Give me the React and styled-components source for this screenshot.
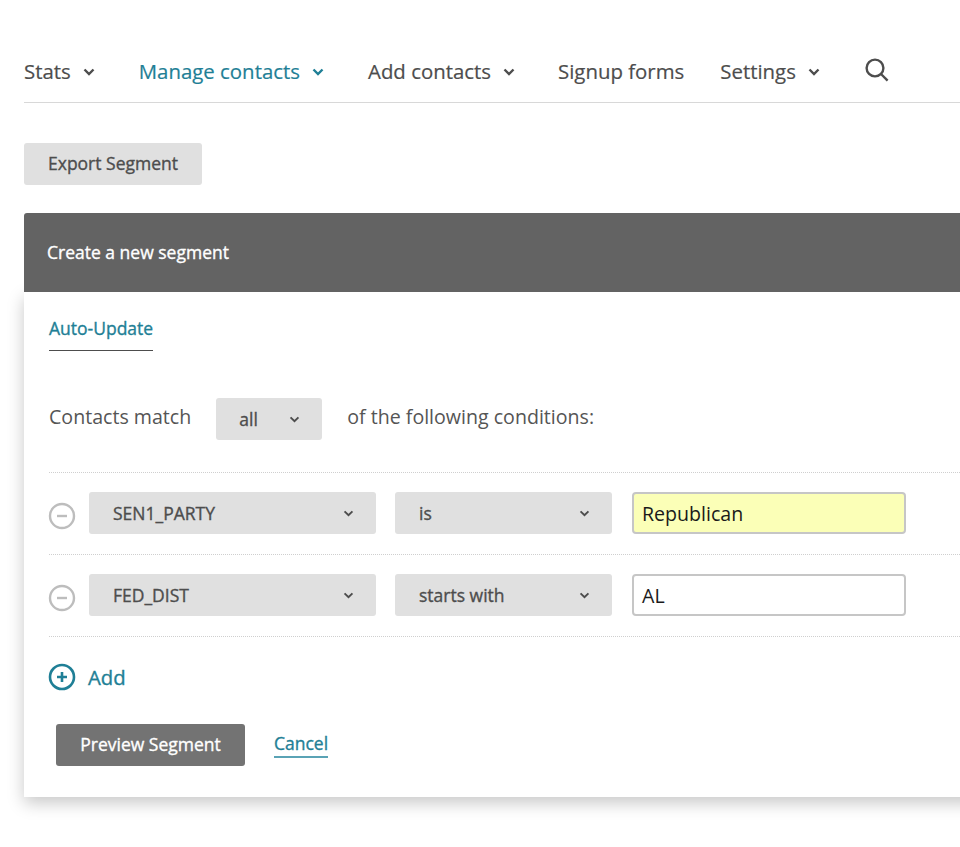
import React from 'react';
import styled, { createGlobalStyle, css } from 'styled-components';

const GlobalStyle = createGlobalStyle`
  html, body {
    margin: 0;
    padding: 0;
    background: #fff;
  }
  body {
    font-family: "Open Sans", "Liberation Sans", sans-serif;
    color: #4d4d4d;
  }
`;

const mediumText = css`
  font-size: 17.5px;
  font-weight: 400;
  -webkit-text-stroke: 0.35px currentColor;
`;

const Page = styled.div`
  width: 960px;
  height: 847px;
  padding: 0 0 0 24px;
  box-sizing: border-box;
  overflow: hidden;
`;

const Nav = styled.nav`
  height: 103px;
  box-sizing: border-box;
  padding-top: 53px;
  border-bottom: 1px solid #d8d8d8;
  display: flex;
  align-items: flex-start;
`;

const NavItem = styled.a`
  display: flex;
  align-items: center;
  height: 37px;
  font-size: 20.4px;
  line-height: 37px;
  -webkit-text-stroke: 0.2px currentColor;
  margin-right: ${(p) => p.$gap}px;
  color: ${(p) => (p.$active ? '#1f7f96' : '#4d4d4d')};
`;

const NavCaret = styled.svg`
  width: 12px;
  height: 8px;
  margin-left: 12px;
  fill: none;
  stroke: currentColor;
  stroke-width: 2.4;
`;

const SearchIcon = styled.svg`
  width: 24px;
  height: 24px;
  margin-top: 5px;
  fill: none;
  stroke: #4d4d4d;
  stroke-width: 2.4;
`;

const ExportButton = styled.button`
  display: block;
  margin-top: 40px;
  width: 178px;
  height: 42px;
  padding: 0 0 2px;
  border: 0;
  border-radius: 3px;
  background: #e0e0e0;
  color: #4d4d4d;
  font-family: "Open Sans", sans-serif;
  ${mediumText}
`;

const Panel = styled.section`
  margin-top: 28px;
  width: 960px;
`;

const PanelHeader = styled.header`
  position: relative;
  z-index: 1;
  height: 79px;
  box-sizing: border-box;
  padding-left: 23px;
  background: #636363;
  color: #fff;
  ${mediumText}
  line-height: 79px;
  border-radius: 3px 0 0 0;
`;

const PanelBody = styled.div`
  height: 505px;
  box-sizing: border-box;
  padding: 24px 0 0 25px;
  background: #fff;
  box-shadow: 0 6px 16px rgba(0, 0, 0, 0.22);
`;

const Tab = styled.div`
  display: inline-block;
  height: 35px;
  box-sizing: border-box;
  border-bottom: 1px solid #4d4d4d;
  color: #1f7f96;
  ${mediumText}
  line-height: 25px;
`;

const MatchLine = styled.div`
  margin-top: 47px;
  height: 42px;
  display: flex;
  align-items: center;
  font-size: 19.6px;
  color: #555;
`;

const MatchText = styled.span`
  margin-bottom: 6px;
`;

const Select = styled.div`
  display: flex;
  align-items: center;
  justify-content: space-between;
  width: ${(p) => p.$width}px;
  height: 42px;
  box-sizing: border-box;
  padding: 0 22px 0 ${(p) => p.$pad}px;
  margin: ${(p) => p.$margin || 0};
  border-radius: 3px;
  background: #e0e0e0;
  color: #4d4d4d;
  ${mediumText}
`;

const SelectCaret = styled.svg`
  width: 11px;
  height: 7px;
  fill: none;
  stroke: #4d4d4d;
  stroke-width: 2.2;
`;

const Conditions = styled.div`
  margin-top: 32px;
  border-top: 1px dotted #cfcfcf;
`;

const Row = styled.div`
  height: 82px;
  box-sizing: border-box;
  padding-top: 19px;
  border-bottom: 1px dotted #cfcfcf;
  display: flex;
  align-items: flex-start;
`;

const RemoveIcon = styled.svg`
  width: 28px;
  height: 28px;
  margin: 10px 13px 0 -1px;
  flex: none;
`;

const ValueBox = styled.div`
  width: 274px;
  height: 42px;
  box-sizing: border-box;
  margin-left: 20px;
  padding-left: 8px;
  border: 2px solid #c6c6c6;
  border-radius: 4px;
  background: ${(p) => (p.$hit ? '#fbffb7' : '#fff')};
  color: #1a1a1a;
  font-size: 19.6px;
  line-height: 39px;
`;

const AddRow = styled.div`
  margin-top: 26px;
  height: 28px;
  display: flex;
  align-items: center;
  color: #1f7f96;
  font-size: 20.3px;
  -webkit-text-stroke: 0.35px currentColor;
`;

const AddIcon = styled.svg`
  width: 28px;
  height: 28px;
  margin: 0 12px 0 -1px;
`;

const Actions = styled.div`
  margin-top: 33px;
  padding-left: 7px;
  display: flex;
  align-items: flex-start;
`;

const PreviewButton = styled.button`
  width: 189px;
  height: 42px;
  padding: 0 0 2px;
  border: 0;
  border-radius: 3px;
  background: #737373;
  color: #fff;
  font-family: "Open Sans", sans-serif;
  ${mediumText}
`;

const CancelLink = styled.a`
  margin: 8px 0 0 29px;
  height: 24px;
  border-bottom: 2px solid #5aa3b5;
  color: #1f7f96;
  ${mediumText}
  line-height: 23px;
`;

const Caret = ({ as: Icon = NavCaret }) => (
    <Icon viewBox="0 0 12 8">
        <path d="M1.5 1.5 6 6l4.5-4.5" />
    </Icon>
);

const navItems = [
    { label: 'Stats', caret: true, gap: 44 },
    { label: 'Manage contacts', caret: true, active: true, gap: 44 },
    { label: 'Add contacts', caret: true, gap: 43 },
    { label: 'Signup forms', gap: 36 },
    { label: 'Settings', caret: true, gap: 45 },
];

const conditions = [
    { field: 'SEN1_PARTY', op: 'is', value: 'Republican', hit: true },
    { field: 'FED_DIST', op: 'starts with', value: 'AL' },
];

const App = () => (
    <Page>
        <GlobalStyle />
        <Nav>
            {navItems.map((item) => (
                <NavItem key={item.label} $active={item.active} $gap={item.gap}>
                    {item.label}
                    {item.caret && <Caret />}
                </NavItem>
            ))}
            <SearchIcon viewBox="0 0 24 24">
                <circle cx="10" cy="10" r="8.4" />
                <path d="m16 16 6.6 6.6" />
            </SearchIcon>
        </Nav>

        <ExportButton>Export Segment</ExportButton>

        <Panel>
            <PanelHeader>Create a new segment</PanelHeader>
            <PanelBody>
                <Tab>Auto-Update</Tab>
                <MatchLine>
                    <MatchText>Contacts match</MatchText>
                    <Select $width={106} $pad={23} $margin="0 25px 0 25px">
                        all
                        <Caret as={SelectCaret} />
                    </Select>
                    <MatchText>of the following conditions:</MatchText>
                </MatchLine>
                <Conditions>
                    {conditions.map((c) => (
                        <Row key={c.field}>
                            <RemoveIcon viewBox="0 0 28 28">
                                <circle cx="14" cy="14" r="12" fill="none" stroke="#bdbdbd" strokeWidth="2.4" />
                                <path d="M9 14h10" stroke="#bdbdbd" strokeWidth="2.4" />
                            </RemoveIcon>
                            <Select $width={287} $pad={24}>
                                {c.field}
                                <Caret as={SelectCaret} />
                            </Select>
                            <Select $width={217} $pad={24} $margin="0 0 0 19px">
                                {c.op}
                                <Caret as={SelectCaret} />
                            </Select>
                            <ValueBox $hit={c.hit}>{c.value}</ValueBox>
                        </Row>
                    ))}
                </Conditions>
                <AddRow>
                    <AddIcon viewBox="0 0 28 28">
                        <circle cx="14" cy="14" r="12" fill="none" stroke="#1f7f96" strokeWidth="2.6" />
                        <path d="M9 14h10M14 9v10" stroke="#1f7f96" strokeWidth="2.6" />
                    </AddIcon>
                    Add
                </AddRow>
                <Actions>
                    <PreviewButton>Preview Segment</PreviewButton>
                    <CancelLink>Cancel</CancelLink>
                </Actions>
            </PanelBody>
        </Panel>
    </Page>
);

export default App;
